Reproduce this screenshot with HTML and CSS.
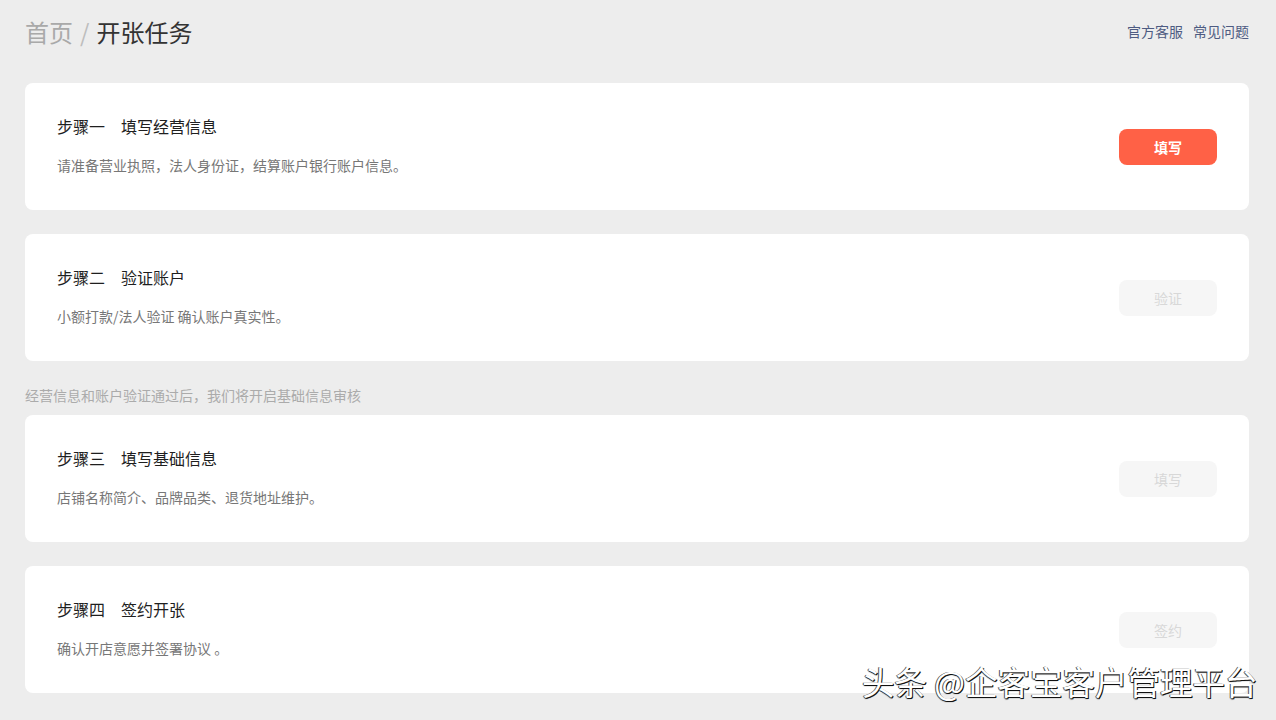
FILE: index.html
```html
<!DOCTYPE html>
<html lang="zh-CN">
<head>
<meta charset="utf-8">
<title>开张任务</title>
<link rel="stylesheet" href="styles.css">
</head>
<body>
<div class="page">
  <header class="header">
    <div class="crumbs"><span class="crumb-home">首页</span><span class="crumb-sep">/</span><span class="crumb-cur">开张任务</span></div>
    <nav class="links"><a class="link">官方客服</a><a class="link">常见问题</a></nav>
  </header>

  <section class="card">
    <div class="card-text">
      <h2 class="card-title"><span class="step">步骤一</span>填写经营信息</h2>
      <p class="card-desc">请准备营业执照，法人身份证，结算账户银行账户信息。</p>
    </div>
    <button class="btn btn-primary">填写</button>
  </section>

  <section class="card">
    <div class="card-text">
      <h2 class="card-title"><span class="step">步骤二</span>验证账户</h2>
      <p class="card-desc">小额打款/法人验证 确认账户真实性。</p>
    </div>
    <button class="btn btn-disabled">验证</button>
  </section>

  <p class="hint">经营信息和账户验证通过后，我们将开启基础信息审核</p>

  <section class="card">
    <div class="card-text">
      <h2 class="card-title"><span class="step">步骤三</span>填写基础信息</h2>
      <p class="card-desc">店铺名称简介、品牌品类、退货地址维护。</p>
    </div>
    <button class="btn btn-disabled">填写</button>
  </section>

  <section class="card">
    <div class="card-text">
      <h2 class="card-title"><span class="step">步骤四</span>签约开张</h2>
      <p class="card-desc">确认开店意愿并签署协议 。</p>
    </div>
    <button class="btn btn-disabled">签约</button>
  </section>
</div>
<div class="watermark">头条 @企客宝客户管理平台</div>
</body>
</html>
```

FILE: styles.css
```css
* { box-sizing: border-box; }
html, body {
  margin: 0;
  padding: 0;
  background: #ededed;
  font-family: "Microsoft YaHei", "Noto Sans CJK SC", "Noto Sans", sans-serif;
}
.page {
  padding: 15px 27px 0 25px;
  display: flex;
  flex-direction: column;
}
.header {
  display: flex;
  justify-content: space-between;
  align-items: flex-start;
  height: 34px;
  margin-bottom: 34px;
}
.crumbs {
  font-size: 24px;
  line-height: 34px;
}
.crumb-home { color: #a9a9a9; }
.crumb-sep { color: #bdbdbd; margin: 0 7px; }
.crumb-cur { color: #333; }
.links {
  display: flex;
  gap: 10px;
  padding-top: 6px;
}
.link {
  font-size: 14px;
  line-height: 20px;
  color: #4d5b82;
  cursor: pointer;
}
.card {
  background: #fff;
  border-radius: 8px;
  padding: 31px 32px 34px 32px;
  display: flex;
  align-items: center;
  justify-content: space-between;
  margin-bottom: 24px;
  height: 127px;
}
.card-title {
  margin: 0;
  font-size: 16px;
  font-weight: normal;
  line-height: 24px;
  color: #1f1f1f;
}
.step { margin-right: 16px; }
.card-desc {
  margin: 16px 0 0;
  font-size: 14px;
  line-height: 22px;
  color: #777;
}
.btn {
  width: 98px;
  height: 36px;
  border: none;
  border-radius: 8px;
  font-family: inherit;
  font-size: 14px;
  margin-top: 3px;
}
.btn-primary {
  background: #ff6146;
  color: #fff;
  font-weight: bold;
}
.btn-disabled {
  background: #f6f6f6;
  color: #d8d8d8;
}
.hint {
  margin: 0 0 10px;
  font-size: 14px;
  line-height: 20px;
  color: #ababab;
}
.watermark {
  position: absolute;
  left: 862px;
  top: 661px;
  font-size: 32.5px;
  line-height: 40px;
  color: #fff;
  text-shadow: 1px 1px 0 #111, -1px 0 0 #555, 0 1px 1px #222;
  white-space: nowrap;
}
```
